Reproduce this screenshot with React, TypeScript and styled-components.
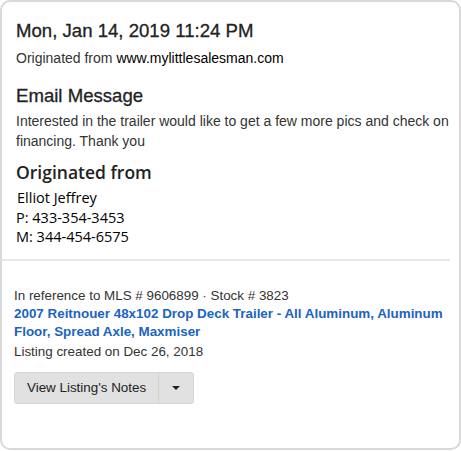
import React from 'react';
import styled, { createGlobalStyle } from 'styled-components';

const GlobalStyle = createGlobalStyle`
  html, body {
    margin: 0;
    padding: 0;
    background: #ffffff;
  }
  body {
    font-family: 'Liberation Sans', Arial, sans-serif;
    color: #333333;
  }
`;

const Card = styled.div`
  box-sizing: border-box;
  width: 461px;
  height: 450px;
  border: 2px solid #d9d9d9;
  border-radius: 10px;
  background: #ffffff;
  overflow: hidden;
`;

const Section = styled.section`
  padding: 18px 6px 0 14px;
`;

const Title = styled.h1<{ $top?: number }>`
  margin: ${(p) => p.$top ?? 0}px 0 0 0;
  font-size: 18.6px;
  line-height: 22px;
  font-weight: 400;
  -webkit-text-stroke: 0.3px #222222;
  color: #222222;
`;

const Text = styled.p<{ $top?: number }>`
  margin: ${(p) => p.$top ?? 6}px 0 0 0;
  font-size: 14px;
  line-height: 20px;
  color: #333333;
  strong {
    font-weight: 400;
    color: #000000;
  }
`;

const ContactHeading = styled.h2`
  margin: 10px 0 0 0;
  font-family: 'Open Sans', 'Noto Sans', sans-serif;
  font-size: 17.5px;
  line-height: 22px;
  font-weight: 600;
  color: #222222;
`;

const ContactList = styled.div`
  margin-top: 5px;
  display: flex;
  flex-direction: column;
  font-family: 'Open Sans', 'Noto Sans', sans-serif;
  font-size: 14.5px;
  line-height: 19.5px;
  color: #000000;
`;

const ContactLine = styled.span<{ $indent?: number }>`
  padding-left: ${(p) => p.$indent ?? 0}px;
`;

const Divider = styled.hr`
  margin: 12px 9px 0 0;
  border: none;
  border-top: 2px solid #e8e8e8;
`;

const Reference = styled.section`
  padding: 25px 12px 0 12px;
`;

const Meta = styled.div`
  font-size: 13.4px;
  line-height: 19px;
  color: #333333;
`;

const ListingLink = styled.a`
  display: block;
  font-size: 13.4px;
  line-height: 18.5px;
  font-weight: 700;
  color: #1a64c2;
  text-decoration: none;
`;

const SplitButton = styled.div`
  display: inline-flex;
  margin-top: 11px;
  border: 1px solid #d6d6d6;
  border-radius: 3px;
  background: #e1e1e1;
  overflow: hidden;
`;

const ButtonPart = styled.button<{ $caret?: boolean }>`
  box-sizing: border-box;
  height: 30px;
  padding: ${(p) => (p.$caret ? '0 13px' : '0 12px')};
  border: none;
  border-left: ${(p) => (p.$caret ? '1px solid #d0d0d0' : 'none')};
  background: transparent;
  font-family: 'Liberation Sans', Arial, sans-serif;
  font-size: 13.4px;
  color: #222222;
  display: flex;
  align-items: center;
  cursor: pointer;
`;

const Caret = styled.span`
  width: 0;
  height: 0;
  border-left: 4px solid transparent;
  border-right: 4px solid transparent;
  border-top: 4px solid #222222;
`;

export default function App() {
  return (
    <>
      <GlobalStyle />
      <Card>
        <Section>
          <Title>Mon, Jan 14, 2019 11:24 PM</Title>
          <Text $top={6}>
            Originated from <strong>www.mylittlesalesman.com</strong>
          </Text>
          <Title as="h2" $top={17}>Email Message</Title>
          <Text $top={4}>
            Interested in the trailer would like to get a few more pics and check on financing. Thank you
          </Text>
          <ContactHeading>Originated from</ContactHeading>
          <ContactList>
            <ContactLine $indent={1}>Elliot Jeffrey</ContactLine>
            <ContactLine $indent={0}>P: 433-354-3453</ContactLine>
            <ContactLine $indent={-1}>M: 344-454-6575</ContactLine>
          </ContactList>
        </Section>
        <Divider />
        <Reference>
          <Meta>In reference to MLS # 9606899 · Stock # 3823</Meta>
          <ListingLink href="#">
            2007 Reitnouer 48x102 Drop Deck Trailer - All Aluminum, Aluminum Floor, Spread Axle, Maxmiser
          </ListingLink>
          <Meta>Listing created on Dec 26, 2018</Meta>
          <SplitButton>
            <ButtonPart>View Listing's Notes</ButtonPart>
            <ButtonPart $caret>
              <Caret />
            </ButtonPart>
          </SplitButton>
        </Reference>
      </Card>
    </>
  );
}
